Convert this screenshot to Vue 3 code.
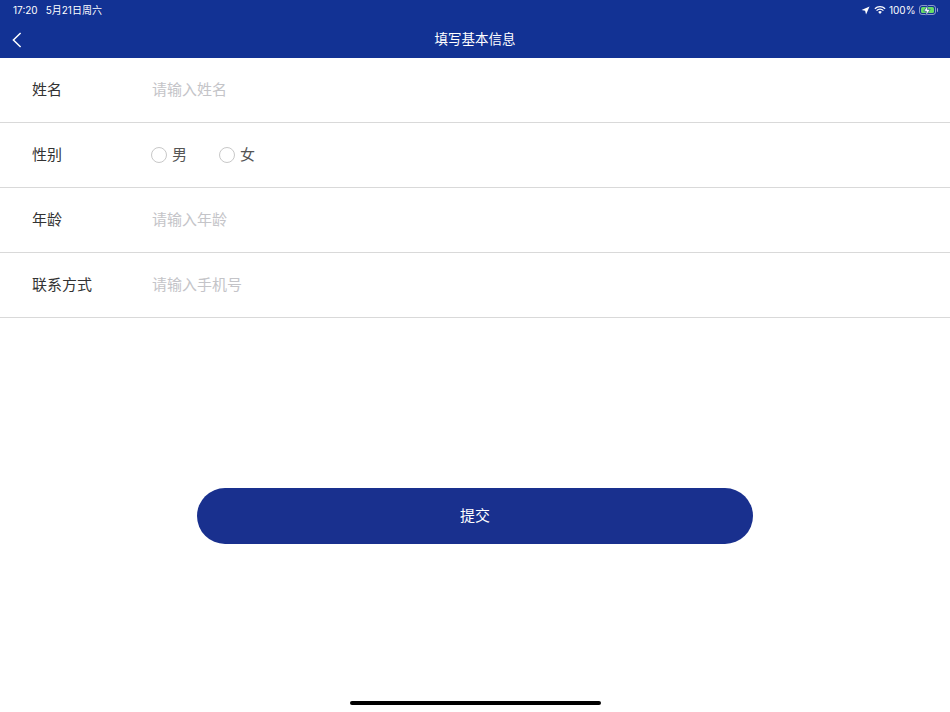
<script setup>
const inputs = {
  name: { label: '姓名', placeholder: '请输入姓名' },
  age: { label: '年龄', placeholder: '请输入年龄' },
  phone: { label: '联系方式', placeholder: '请输入手机号' },
}
</script>

<template>
  <div class="page">
    <header class="topbar">
      <div class="status">
        <div class="status__left">
          <span>17:20</span>
          <span class="status__date">5月21日周六</span>
        </div>
        <div class="status__right">
          <svg class="ico-loc" viewBox="0 0 10 10"><path d="M9.5.5 5.6 9.4 4.6 5.4.6 4.4z" fill="#fff" /></svg>
          <svg class="ico-wifi" viewBox="0 0 14 10">
            <path d="M1 3.6a8.6 8.6 0 0 1 12 0M3 5.7a5.8 5.8 0 0 1 8 0" fill="none" stroke="#fff" stroke-width="1.5" />
            <path d="M4.9 7.3a3 3 0 0 1 4.2 0L7 9.6z" fill="#fff" />
          </svg>
          <span class="pct">100%</span>
          <div class="battery">
            <div class="battery__body">
              <div class="battery__fill"></div>
              <svg viewBox="0 0 8 11"><path d="M4.8 0 .8 6.2h2.6L2.7 11l4.5-6.6H4.3z" fill="#fff" stroke="#14328f" stroke-width=".6" /></svg>
            </div>
            <div class="battery__cap"></div>
          </div>
        </div>
      </div>
      <div class="navbar">
        <svg class="back" viewBox="0 0 10 16"><path d="M8.6 1 1.4 8l7.2 7" fill="none" stroke="#fff" stroke-width="1.5" /></svg>
        <h1 class="title">填写基本信息</h1>
      </div>
    </header>

    <form class="form" @submit.prevent>
      <div class="row">
        <label class="row__label">{{ inputs.name.label }}</label>
        <input class="row__input" :placeholder="inputs.name.placeholder" />
      </div>
      <div class="row">
        <label class="row__label">性别</label>
        <div class="radios">
          <span class="radio"><i class="radio__dot"></i>男</span>
          <span class="radio"><i class="radio__dot"></i>女</span>
        </div>
      </div>
      <div class="row">
        <label class="row__label">{{ inputs.age.label }}</label>
        <input class="row__input" :placeholder="inputs.age.placeholder" />
      </div>
      <div class="row">
        <label class="row__label">{{ inputs.phone.label }}</label>
        <input class="row__input" :placeholder="inputs.phone.placeholder" />
      </div>
      <div class="actions">
        <button class="submit" type="submit">提交</button>
      </div>
    </form>

    <div class="home-wrap"><div class="home"></div></div>
  </div>
</template>

<style>
html, body { margin: 0; background: #fff; }
</style>

<style scoped>
.page {
  width: 950px;
  height: 712px;
  display: flex;
  flex-direction: column;
  overflow: hidden;
  background: #fff;
  font-family: "Noto Sans CJK SC", "Liberation Sans", sans-serif;
}

.topbar {
  background: #123294;
  color: #fff;
  height: 58px;
  flex: none;
}

.status {
  height: 20px;
  display: flex;
  align-items: center;
  justify-content: space-between;
  padding: 0 12px 0 13px;
  font-family: Inter, "Noto Sans CJK SC", sans-serif;
  font-size: 10px;
}
.status__left { display: flex; align-items: center; gap: 8px; }
.status__left span { line-height: 20px; }
.status__right { display: flex; align-items: center; }
.ico-loc { width: 9px; height: 9px; margin-right: 4px; }
.ico-wifi { width: 12px; height: 10px; margin-right: 3px; }
.pct { margin-right: 3px; }

.battery { display: flex; align-items: center; }
.battery__body {
  width: 17px;
  height: 10px;
  box-sizing: border-box;
  padding: 1px;
  border: 1px solid rgba(255, 255, 255, 0.5);
  border-radius: 3px;
  position: relative;
  display: flex;
}
.battery__fill {
  flex: 1;
  background: #66dd66;
  border-radius: 1.5px;
}
.battery__body svg {
  position: absolute;
  left: 3.5px;
  top: -1.5px;
  width: 8px;
  height: 11px;
}
.battery__cap {
  width: 1.5px;
  height: 4px;
  margin-left: 1px;
  background: rgba(255, 255, 255, 0.55);
  border-radius: 0 1px 1px 0;
}

.navbar {
  height: 38px;
  padding-bottom: 2px;
  box-sizing: border-box;
  position: relative;
  display: flex;
  align-items: center;
  justify-content: center;
}
.back {
  position: absolute;
  left: 12px;
  top: 12px;
  width: 10px;
  height: 16px;
}
.title {
  margin: 0;
  font-size: 13.5px;
  font-weight: 400;
}

.form { flex: 1; display: flex; flex-direction: column; }

.row {
  height: 65px;
  box-sizing: border-box;
  flex: none;
  display: flex;
  align-items: center;
  padding: 0 0 2px 32px;
  border-bottom: 1px solid #d9d9d9;
}
.row__label {
  width: 120px;
  margin-bottom: 1px;
  font-size: 15px;
  color: #333;
}
.row__input {
  flex: 1;
  border: 0;
  outline: 0;
  padding: 0 0 2px;
  background: transparent;
  font: inherit;
  font-size: 15px;
  color: #333;
}
.row__input::placeholder { color: #c4c4c8; opacity: 1; }

.radios { display: flex; gap: 32px; margin-left: -1px; }
.radio {
  display: flex;
  align-items: center;
  gap: 5px;
  padding-bottom: 1px;
  font-size: 15px;
  color: #555;
}
.radio__dot {
  width: 14px;
  height: 14px;
  margin-top: 3px;
  border: 1px solid #c8c8c8;
  border-radius: 50%;
}

.actions {
  display: flex;
  justify-content: center;
  padding-top: 170px;
}
.submit {
  width: 556px;
  height: 56px;
  padding: 0 0 3px;
  border: 0;
  border-radius: 28px;
  background: #19308e;
  color: #fff;
  font: inherit;
  font-size: 15px;
}

.home-wrap {
  height: 11px;
  flex: none;
  display: flex;
  justify-content: center;
}
.home {
  width: 251px;
  height: 4px;
  background: #000;
  border-radius: 2px;
}
</style>
